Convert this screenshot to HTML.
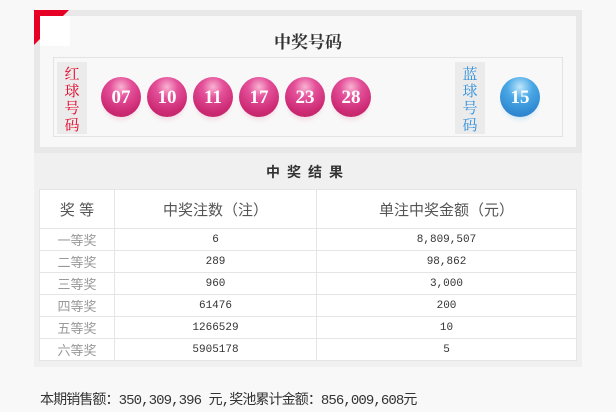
<!DOCTYPE html>
<html><head><meta charset="utf-8"><style>
*{margin:0;padding:0;box-sizing:border-box}
body{width:616px;height:412px;background:#f8f8f8;font-family:"Liberation Sans","Noto Sans CJK SC",sans-serif;position:relative;overflow:hidden}
.frame{position:absolute;left:34px;top:10px;width:548px;height:143px;background:#e8e8e8}
.fin{position:absolute;left:6px;top:6px;right:6px;bottom:6px;background:#f8f8f8}
.corner{position:absolute;left:34px;top:10px;width:0;height:0;border-top:35px solid #e60026;border-right:35px solid transparent}
.wsq{position:absolute;left:40px;top:16px;width:30px;height:30px;background:#fff}
.title{position:absolute;left:0;width:616px;top:28px;text-align:center;font-size:17px;color:#333;font-family:"Noto Serif CJK SC",serif;font-weight:bold}
.balls{position:absolute;left:53px;top:57px;width:510px;height:80px;border:1px solid #e3e3e3}
.lab{position:absolute;top:4px;width:30px;height:72px;background:#ebebeb;font-size:15px;line-height:17px;text-align:center;padding-top:3px;font-family:"Noto Serif CJK SC",serif}
.ball{position:absolute;top:19px;width:40px;height:40px;border-radius:50%;color:#fff;font:bold 19px/41px "Liberation Serif",serif;text-align:center;background:radial-gradient(circle at 50% 25%,#f9b4d2 0,#e4509a 30%,#cc2a73 70%,#b8215f 100%);box-shadow:0 5px 4px -2px #f3dde6}
.blue{background:radial-gradient(circle at 50% 25%,#bfe6fb 0,#4aa8e6 35%,#2f88d0 75%,#2a78c0 100%);box-shadow:0 5px 4px -2px #d6eaf6}
.res{position:absolute;left:34px;top:153px;width:548px;height:214px;background:#f0f0f0}
.rt{position:absolute;left:0;width:616px;top:162px;text-align:center;font-size:14px;font-weight:bold;color:#333;letter-spacing:7px}
table{position:absolute;left:39px;top:189px;width:538px;border-collapse:collapse;background:#fff}
td{border:1px solid #e5e5e5;text-align:center;font-size:11px;color:#333;height:22px;font-family:"Liberation Mono","Noto Sans CJK SC",monospace}
tr.h td{height:39px;font-size:15px;color:#555;font-family:"Liberation Sans","Noto Sans CJK SC",sans-serif}
td.g{color:#999;font-size:13px;font-family:"Liberation Sans","Noto Sans CJK SC",sans-serif}
.foot{position:absolute;left:40px;top:389px;font-size:14px;color:#333;font-family:"Liberation Mono","Noto Sans CJK SC",monospace;letter-spacing:-0.9px}
</style></head><body>
<div class="frame"><div class="fin"></div></div>
<div class="corner"></div><div class="wsq"></div>
<div class="title">中奖号码</div>
<div class="balls">
<div class="lab" style="left:3px;color:#e60026">红<br>球<br>号<br>码</div>
<div class="ball" style="left:47px">07</div>
<div class="ball" style="left:93px">10</div>
<div class="ball" style="left:139px">11</div>
<div class="ball" style="left:185px">17</div>
<div class="ball" style="left:231px">23</div>
<div class="ball" style="left:277px">28</div>
<div class="lab" style="left:401px;color:#2f8fdc">蓝<br>球<br>号<br>码</div>
<div class="ball blue" style="left:446px">15</div>
</div>
<div class="res"></div>
<div class="rt">中奖结果</div>
<table>
<tr class="h"><td style="width:75px">奖 等</td><td style="width:202px">中奖注数（注）</td><td>单注中奖金额（元）</td></tr>
<tr><td class="g">一等奖</td><td>6</td><td>8,809,507</td></tr>
<tr><td class="g">二等奖</td><td>289</td><td>98,862</td></tr>
<tr><td class="g">三等奖</td><td>960</td><td>3,000</td></tr>
<tr><td class="g">四等奖</td><td>61476</td><td>200</td></tr>
<tr><td class="g">五等奖</td><td>1266529</td><td>10</td></tr>
<tr><td class="g">六等奖</td><td>5905178</td><td>5</td></tr>
</table>
<div class="foot">本期销售额：350,309,396 元,奖池累计金额：856,009,608元</div>
</body></html>
